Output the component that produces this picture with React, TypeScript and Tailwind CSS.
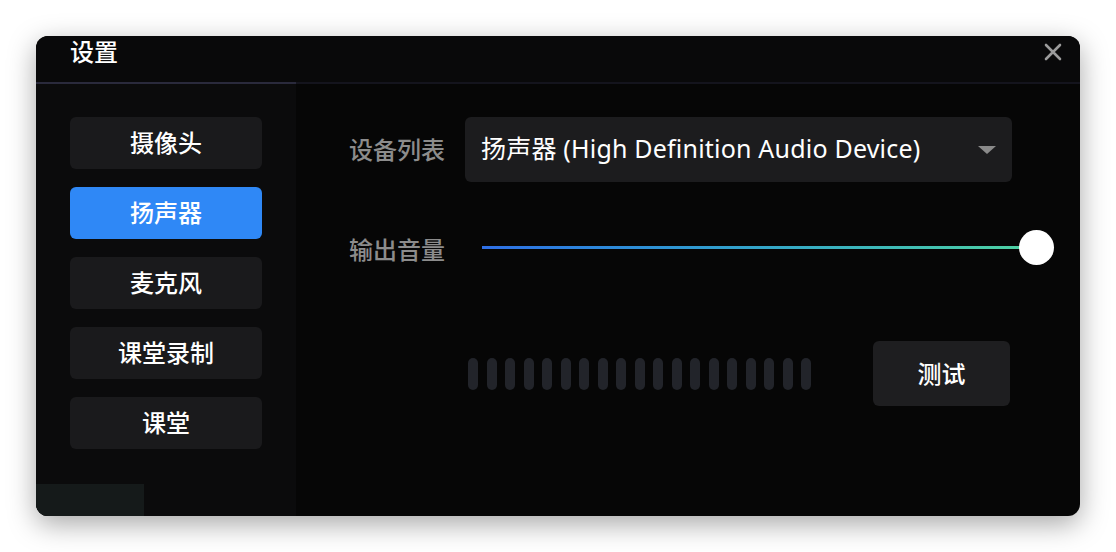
import React from 'react';

const tabs = ['摄像头', '扬声器', '麦克风', '课堂录制', '课堂'];

export default function App() {
  return (
    <div
      className="w-[1116px] h-[552px] bg-white p-[36px]"
      style={{ fontFamily: '"Noto Sans", "Noto Sans CJK SC", sans-serif' }}
    >
      <div className="w-[1044px] h-[480px] rounded-[12px] overflow-hidden bg-[#060606] flex flex-col shadow-[0_8px_28px_rgba(0,0,0,0.35)]">
        {/* Header */}
        <div className="h-[46px] bg-[#09090a] flex items-start justify-between pl-[34px] pr-[18px]">
          <span className="text-[24px] font-medium text-white leading-[32px]">设置</span>
          <svg width="18" height="18" viewBox="0 0 18 18" className="mt-[7px]">
            <path d="M2 2 L16 16 M16 2 L2 16" stroke="#9b9b9b" strokeWidth="2.6" strokeLinecap="round" />
          </svg>
        </div>
        <div className="flex h-[2px]">
          <div className="w-[260px] bg-[#2a2a3c]" />
          <div className="flex-1 bg-[#14141d]" />
        </div>

        <div className="flex flex-1">
          {/* Sidebar */}
          <div className="w-[260px] bg-[#0b0b0c] flex flex-col">
            <div className="flex flex-col gap-[18px] pt-[33px] pl-[34px]">
              {tabs.map((t, i) => (
                <div
                  key={t}
                  className={`w-[192px] h-[52px] rounded-[6px] flex items-center justify-center text-[24px] font-medium text-white ${
                    i === 1 ? 'bg-[#2f88f6]' : 'bg-[#1a1a1c]'
                  }`}
                >
                  {t}
                </div>
              ))}
            </div>
            <div className="mt-auto w-[108px] h-[32px] bg-[#151a1a]" />
          </div>

          {/* Main */}
          <div className="flex-1 flex flex-col pl-[53px] pt-[33px]">
            <div className="flex items-center h-[65px]">
              <span className="w-[116px] text-[24px] text-[#8c8c8c] font-medium">设备列表</span>
              <div className="w-[547px] h-[65px] rounded-[6px] bg-[#1c1c1e] flex items-center justify-between pl-[16px] pr-[16px]">
                <span className="text-[25px] tracking-[0.2px] text-white leading-[32px] pb-[3px]">扬声器 (High Definition Audio Device)</span>
                <svg width="18" height="8" viewBox="0 0 18 8">
                  <path d="M0 0 L18 0 L9 8 Z" fill="#8a8a8a" />
                </svg>
              </div>
            </div>

            <div className="flex items-center h-[36px] mt-[47px]">
              <span className="w-[133px] text-[24px] text-[#8c8c8c] font-medium pt-[6px]">输出音量</span>
              <div className="relative w-[572px] h-[36px] flex items-center">
                <div className="w-[555px] h-[3px] bg-gradient-to-r from-[#2f6fe6] to-[#4fd3a0]" />
                <div className="absolute right-0 top-[0.5px] w-[35px] h-[35px] rounded-full bg-white" />
              </div>
            </div>

            <div className="flex items-center h-[65px] mt-[76px]">
              <div className="ml-[119px] flex gap-[8.5px]">
                {Array.from({ length: 19 }).map((_, i) => (
                  <div key={i} className="w-[10px] h-[32px] rounded-full bg-[#22242a]" />
                ))}
              </div>
              <div className="ml-[62px] w-[137px] h-[65px] rounded-[6px] bg-[#1e1e20] flex items-center justify-center text-[24px] font-medium text-white">
                测试
              </div>
            </div>
          </div>
        </div>
      </div>
    </div>
  );
}
